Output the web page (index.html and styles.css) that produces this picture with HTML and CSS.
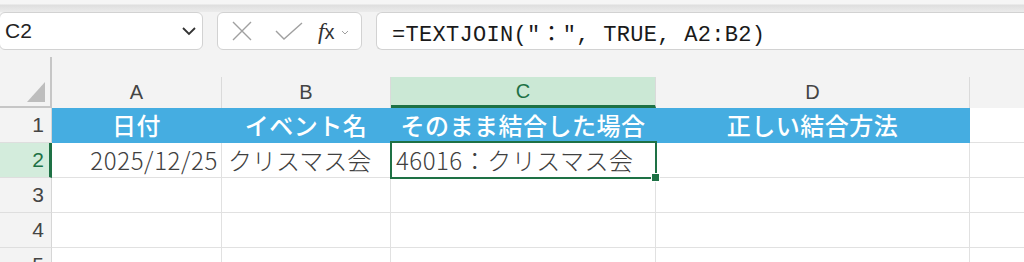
FILE: index.html
```html
<!DOCTYPE html>
<html lang="ja">
<head>
  <meta charset="UTF-8">
  <title>TEXTJOIN</title>
  <link rel="stylesheet" href="styles.css">
</head>
<body>
  <div class="ribbon-edge"></div>

  <!-- Formula bar -->
  <div class="formula-bar">
    <div class="name-box">
      <span>C2</span>
      <svg class="chevron" width="16" height="10" viewBox="0 0 16 10">
        <path d="M2 2 L8 8 L14 2" fill="none" stroke="#333" stroke-width="1.8"/>
      </svg>
    </div>
    <div class="func-box">
      <svg width="20" height="20" viewBox="0 0 20 20">
        <path d="M1 1 L19 19 M19 1 L1 19" stroke="#a0a0a0" stroke-width="1.4"/>
      </svg>
      <svg width="28" height="18" viewBox="0 0 28 18">
        <path d="M1 9 L9 17 L27 1" fill="none" stroke="#a0a0a0" stroke-width="1.4"/>
      </svg>
      <span class="fx"><i>f</i><span class="fx-x">x</span></span>
      <svg class="mini" width="8" height="5" viewBox="0 0 8 5">
        <path d="M1 1 L4 4 L7 1" fill="none" stroke="#a0a0a0" stroke-width="1"/>
      </svg>
    </div>
    <div class="formula-input">=TEXTJOIN("：", TRUE, A2:B2)</div>
  </div>

  <!-- Sheet grid -->
  <div class="sheet">
    <div class="corner"><div class="corner-tri"></div></div>
    <div class="col-head"><div class="col-label">A</div></div>
    <div class="col-head"><div class="col-label">B</div></div>
    <div class="col-head"><div class="col-label selected">C</div></div>
    <div class="col-head"><div class="col-label">D</div></div>
    <div class="col-head"><div class="col-label last"></div></div>

    <div class="row-head">1</div>
    <div class="cell title">日付</div>
    <div class="cell title">イベント名</div>
    <div class="cell title">そのまま結合した場合</div>
    <div class="cell title">正しい結合方法</div>
    <div class="cell"></div>

    <div class="row-head selected">2</div>
    <div class="cell num">2025/12/25</div>
    <div class="cell">クリスマス会</div>
    <div class="cell active">46016：クリスマス会</div>
    <div class="cell"></div>
    <div class="cell"></div>

    <div class="row-head">3</div>
    <div class="cell"></div>
    <div class="cell"></div>
    <div class="cell"></div>
    <div class="cell"></div>
    <div class="cell"></div>

    <div class="row-head">4</div>
    <div class="cell"></div>
    <div class="cell"></div>
    <div class="cell"></div>
    <div class="cell"></div>
    <div class="cell"></div>

    <div class="row-head">5</div>
    <div class="cell"></div>
    <div class="cell"></div>
    <div class="cell"></div>
    <div class="cell"></div>
    <div class="cell"></div>
  </div>
</body>
</html>
```

FILE: styles.css
```css
/* Basic Reset */
* {
  margin: 0;
  padding: 0;
  box-sizing: border-box;
}

body {
  width: 1024px;
  height: 262px;
  overflow: hidden;
  background-color: #f3f3f3;
  font-family: "Noto Sans CJK JP", sans-serif;
  color: #3a3a3a;
}

.ribbon-edge {
  height: 12px;
  background: linear-gradient(#f5f5f5 0, #f5f5f5 4px, #dedede 5px, #ebebeb 12px);
}

/* Formula bar */
.formula-bar {
  display: flex;
  gap: 14px;
  height: 38px;
  margin-left: -1px;
}

.name-box,
.func-box,
.formula-input {
  background-color: white;
  border: 1px solid #d2d2d2;
  border-radius: 6px;
  display: flex;
  align-items: center;
}

.name-box {
  width: 204px;
  padding: 0 5px 0 5px;
  justify-content: space-between;
  font-family: "Liberation Sans", sans-serif;
  font-size: 21px;
  color: #222;
}

.func-box {
  width: 145px;
  padding-left: 14px;
  gap: 23px;
}

.func-box .fx {
  font-family: "Liberation Serif", serif;
  font-size: 23px;
  color: #333;
  margin-left: -8px;
  margin-top: 2px;
}

.func-box .fx-x {
  font-family: "Liberation Sans", sans-serif;
  font-size: 20px;
}

.func-box .mini {
  margin-left: -16px;
  margin-top: 2px;
}

.formula-input {
  flex: 1;
  border-right: none;
  border-radius: 6px 0 0 6px;
  padding-left: 15px;
  font-family: "Liberation Mono", "Noto Sans CJK JP", monospace;
  font-size: 22px;
  letter-spacing: 0.3px;
  color: #1a1a1a;
}

/* Sheet */
.sheet {
  margin-top: 7px;
  display: grid;
  grid-template-columns: 52px 170px 169px 265px 314px 60px;
  grid-template-rows: 51px repeat(5, 35px);
}

.corner {
  border-right: 2px solid #c6c6c6;
  border-bottom: 2px solid #c6c6c6;
  display: flex;
  justify-content: flex-end;
  align-items: flex-end;
  padding: 0 5px 4px 0;
}

.corner-tri {
  width: 0;
  height: 0;
  border-left: 18px solid transparent;
  border-bottom: 20px solid #bdbdbd;
}

.col-head {
  display: flex;
  align-items: flex-end;
}

.col-label {
  width: 100%;
  height: 31px;
  border-right: 1px solid #dadada;
  text-align: center;
  line-height: 31px;
  font-family: "Liberation Sans", sans-serif;
  font-size: 20px;
  color: #444;
}

.col-label.selected {
  background-color: #cbe8d5;
  border-bottom: 3px solid #1e7145;
  color: #1e7145;
  line-height: 29px;
}

.col-label.last {
  border-right: none;
}

.row-head {
  border-right: 1px solid #d6d6d6;
  border-bottom: 1px solid #dedede;
  text-align: right;
  padding-right: 7px;
  line-height: 34px;
  font-family: "Liberation Sans", sans-serif;
  font-size: 21px;
  color: #444;
}

.row-head.selected {
  background-color: #d3ecdc;
  border-right: 3px solid #1e7145;
  padding-right: 5px;
  color: #1e7145;
}

.cell {
  background-color: white;
  border-right: 1px solid #e1e1e1;
  border-bottom: 1px solid #e1e1e1;
  padding: 0 6px;
  line-height: 34px;
  font-size: 24px;
  font-weight: 300;
  white-space: nowrap;
  color: #404040;
}

.cell.title {
  background-color: #45ade1;
  border-color: #45ade1;
  color: white;
  font-weight: 500;
  text-align: center;
  letter-spacing: 0.5px;
}

.cell.num {
  text-align: right;
  padding-right: 3px;
  letter-spacing: 0.6px;
}

.cell.active {
  position: relative;
  padding-left: 5px;
  letter-spacing: 0.5px;
}

/* selection frame and fill handle */
.cell.active::after {
  content: "";
  position: absolute;
  left: -1px;
  top: -2px;
  right: -2px;
  bottom: -2px;
  border: 2px solid #1e7145;
}

.cell.active::before {
  content: "";
  position: absolute;
  right: -5px;
  bottom: -5px;
  width: 7px;
  height: 7px;
  background-color: #1e7145;
  border: 1px solid white;
  z-index: 1;
}
```
